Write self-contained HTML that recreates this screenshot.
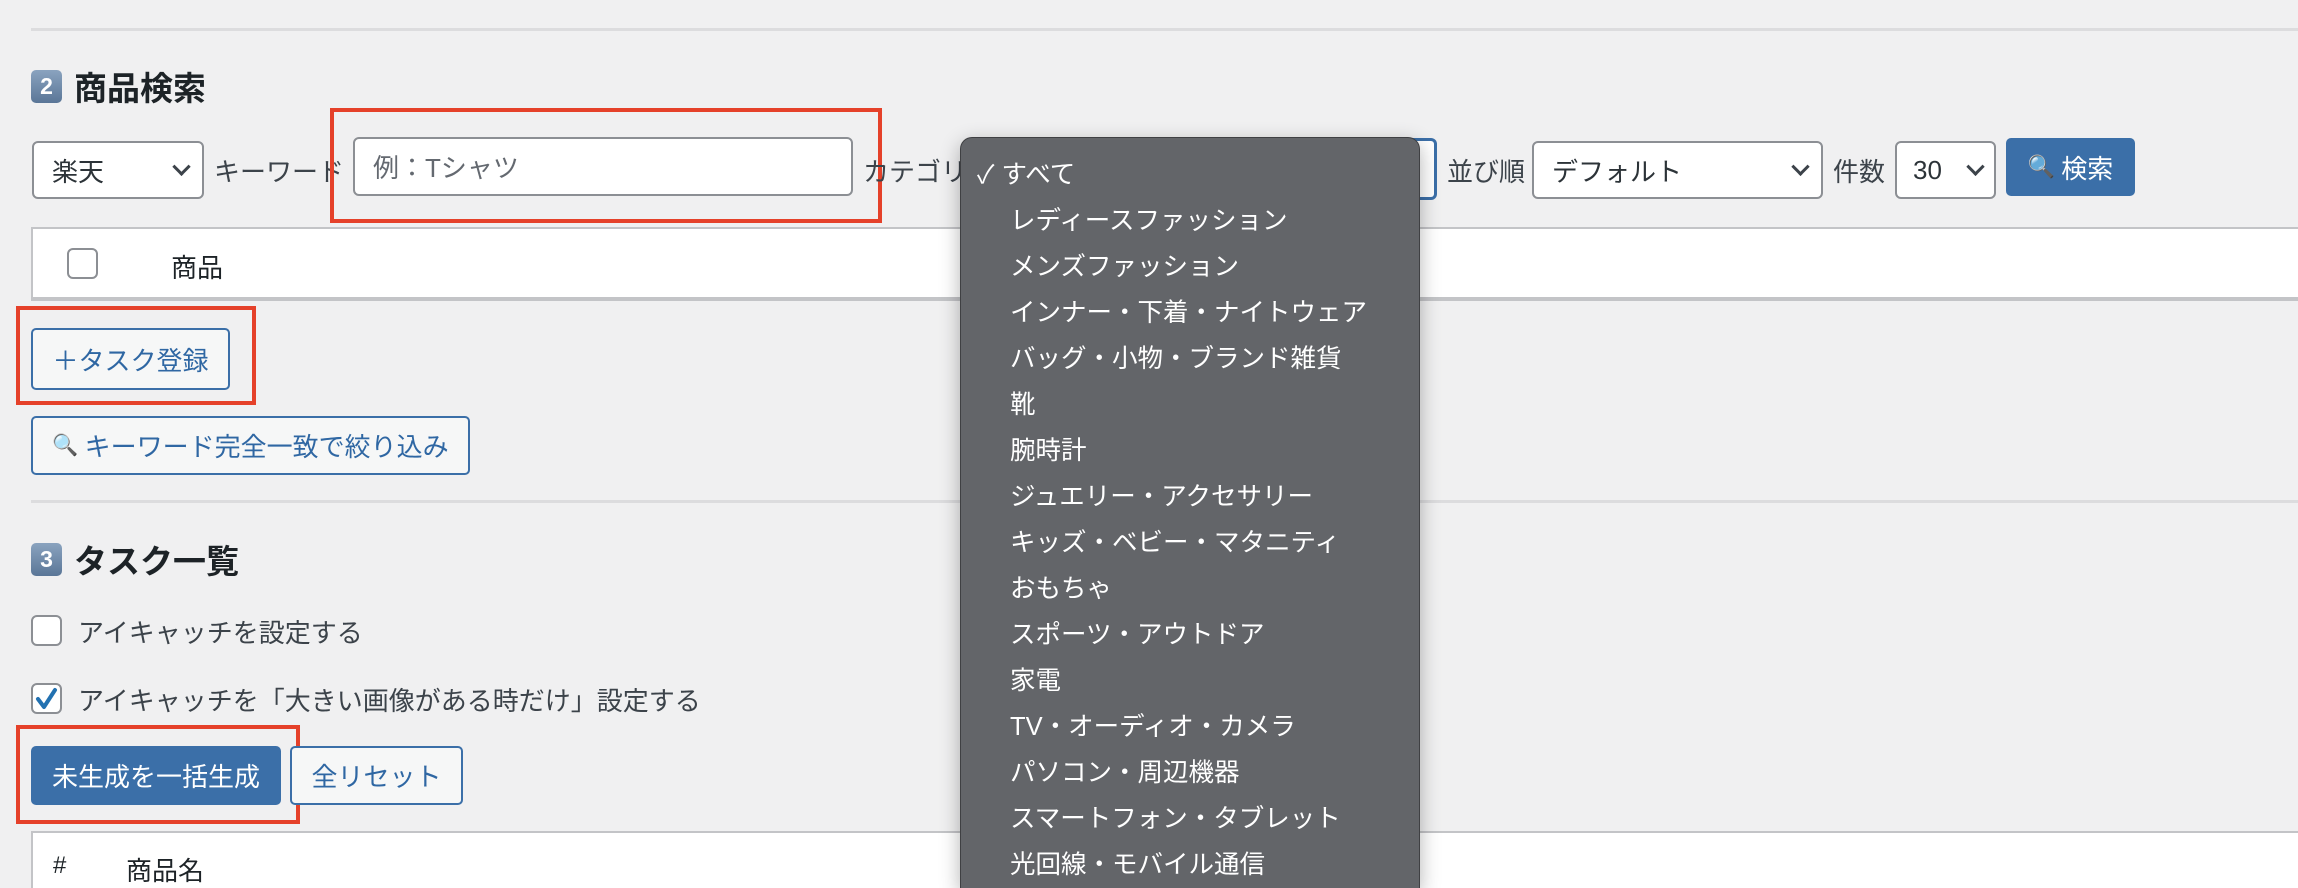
<!DOCTYPE html>
<html style="overflow:hidden;width:2298px;height:888px"><head><meta charset="utf-8"><style>
*{box-sizing:border-box;margin:0;padding:0}
body{width:2298px;height:888px;overflow:hidden;background:#f0f0f1;font-family:"Liberation Sans","Noto Sans CJK JP",sans-serif;color:#3c434a;font-size:26px;position:relative}
.a{position:absolute}
.hr{height:3px;background:#dcdcde;left:31px;right:0}
.h{font-weight:bold;font-size:33px;color:#1d2327;display:flex;align-items:center}
.num{width:31px;height:33px;border-radius:5px;background:linear-gradient(#8aa3bf,#5a7697);color:#fff;font-size:23px;display:flex;align-items:center;justify-content:center;margin-right:12px;font-weight:bold}
.sel{background:#fff;border:2px solid #8c8f94;border-radius:6px;display:flex;align-items:center;padding-left:18px;color:#2c3338;font-size:26px}
.chev{position:absolute;right:14px;top:50%;width:13px;height:13px;border-right:3px solid #3c434a;border-bottom:3px solid #3c434a;transform:translateY(-75%) rotate(45deg)}
.red{border:4px solid #e5412a}
.btn{border:2px solid #3b6fa8;border-radius:5px;background:#f6f7f7;color:#2f67a3;display:flex;align-items:center;justify-content:center;font-size:26px}
.pri{background:#3b6fa8;color:#fff}
.cb{width:31px;height:31px;border:2px solid #8c8f94;border-radius:6px;background:#fff}
.dd{left:960px;top:137px;width:460px;height:751px;background:#636569;border-radius:12px 12px 0 0;border:1px solid #3f4043;border-bottom:none;box-shadow:0 6px 20px rgba(0,0,0,.3);color:#fff;font-size:25.5px}
.dd div{position:absolute;left:49px;white-space:nowrap}
</style></head><body>
<div class="a hr" style="top:28px"></div>
<div class="a h" style="left:31px;top:62px"><span class="num">2</span>商品検索</div>

<div class="a sel" style="left:32px;top:141px;width:172px;height:58px">楽天<span class="chev"></span></div>
<div class="a" style="left:214px;top:152px">キーワード</div>
<div class="a sel" style="left:353px;top:137px;width:500px;height:59px;color:#646970">例：Tシャツ</div>
<div class="a red" style="left:330px;top:108px;width:552px;height:115px"></div>
<div class="a" style="left:863px;top:152px">カテゴリ</div>
<div class="a" style="left:1300px;top:138px;width:137px;height:62px;border:3px solid #3b6fa8;border-left:none;border-radius:0 6px 6px 0;background:#fff"></div>
<div class="a" style="left:1447px;top:152px">並び順</div>
<div class="a sel" style="left:1532px;top:141px;width:291px;height:58px">デフォルト<span class="chev"></span></div>
<div class="a" style="left:1833px;top:152px">件数</div>
<div class="a sel" style="left:1895px;top:141px;width:101px;height:58px;padding-left:16px">30<span class="chev" style="right:12px"></span></div>
<div class="a btn pri" style="left:2006px;top:138px;width:129px;height:58px;font-size:26px"><span style="font-size:22px;margin-right:6px">🔍</span>検索</div>

<div class="a" style="left:31px;top:227px;width:2267px;height:74px;background:#fff;border:2px solid #c3c4c7;border-bottom-width:4px;border-right:none"></div>
<div class="a cb" style="left:67px;top:248px"></div>
<div class="a" style="left:171px;top:248px;color:#1d2327">商品</div>

<div class="a red" style="left:16px;top:306px;width:240px;height:99px"></div>
<div class="a btn" style="left:31px;top:328px;width:199px;height:62px">＋タスク登録</div>
<div class="a btn" style="left:31px;top:416px;width:439px;height:59px"><span style="font-size:21px;margin-right:6px">🔍</span>キーワード完全一致で絞り込み</div>

<div class="a hr" style="top:500px"></div>
<div class="a h" style="left:31px;top:535px"><span class="num">3</span>タスク一覧</div>

<div class="a cb" style="left:31px;top:615px"></div>
<div class="a" style="left:78px;top:613px">アイキャッチを設定する</div>
<div class="a cb" style="left:31px;top:683px"></div>
<svg class="a" style="left:34px;top:687px" width="26" height="24" viewBox="0 0 26 24"><path d="M4 12 L10 20 L21 3" fill="none" stroke="#2271b1" stroke-width="4" stroke-linecap="round" stroke-linejoin="round"/></svg>
<div class="a" style="left:78px;top:681px">アイキャッチを「大きい画像がある時だけ」設定する</div>

<div class="a red" style="left:16px;top:725px;width:284px;height:99px"></div>
<div class="a btn pri" style="left:31px;top:746px;width:250px;height:59px">未生成を一括生成</div>
<div class="a btn" style="left:290px;top:746px;width:173px;height:59px">全リセット</div>

<div class="a" style="left:31px;top:831px;width:2267px;height:57px;background:#fff;border:2px solid #c3c4c7;border-bottom:none;border-right:none"></div>
<div class="a" style="left:53px;top:852px;color:#1d2327;font-size:24px">#</div>
<div class="a" style="left:126px;top:851px;color:#1d2327">商品名</div>

<div class="a dd">
<div style="left:16px;top:16px">✓ すべて</div>
<div style="top:62px">レディースファッション</div>
<div style="top:108px">メンズファッション</div>
<div style="top:154px">インナー・下着・ナイトウェア</div>
<div style="top:200px">バッグ・小物・ブランド雑貨</div>
<div style="top:246px">靴</div>
<div style="top:292px">腕時計</div>
<div style="top:338px">ジュエリー・アクセサリー</div>
<div style="top:384px">キッズ・ベビー・マタニティ</div>
<div style="top:430px">おもちゃ</div>
<div style="top:476px">スポーツ・アウトドア</div>
<div style="top:522px">家電</div>
<div style="top:568px">TV・オーディオ・カメラ</div>
<div style="top:614px">パソコン・周辺機器</div>
<div style="top:660px">スマートフォン・タブレット</div>
<div style="top:706px">光回線・モバイル通信</div>
</div>
</body></html>
